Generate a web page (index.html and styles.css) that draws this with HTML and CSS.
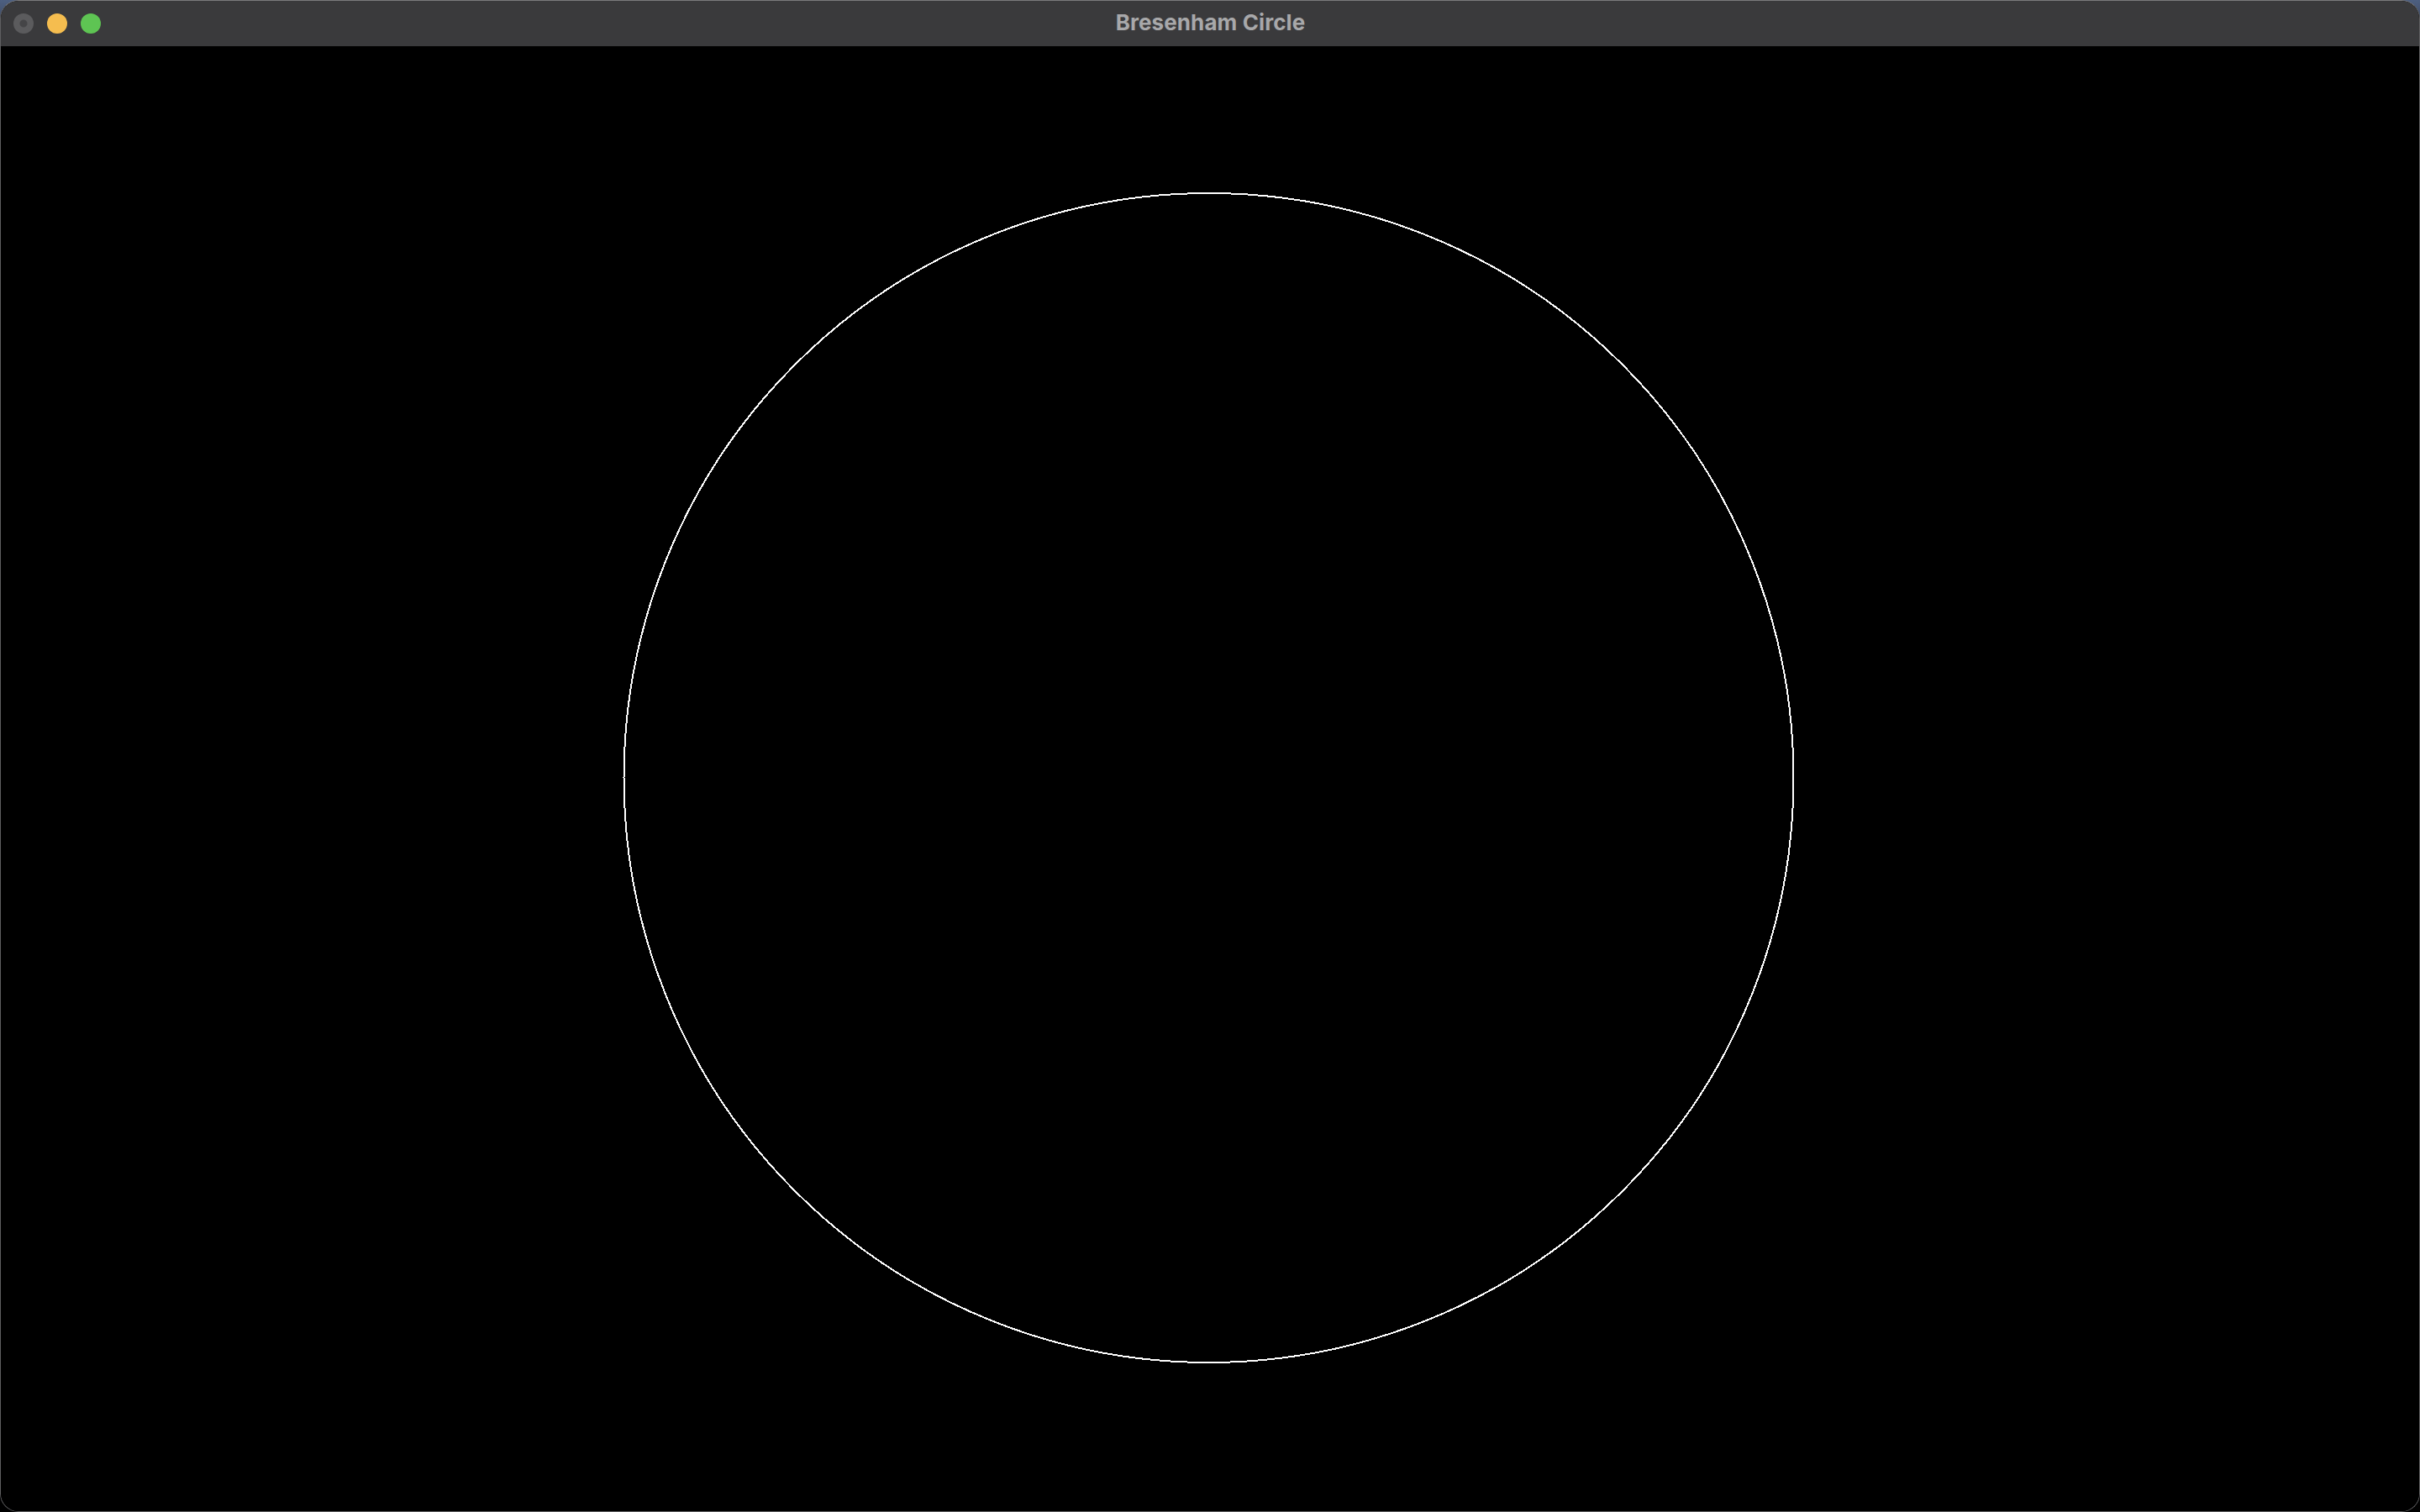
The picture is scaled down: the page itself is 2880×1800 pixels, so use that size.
FILE: index.html
```html
<!DOCTYPE html>
<html>
<head>
<meta charset="utf-8">
<title>Bresenham Circle</title>
<link rel="stylesheet" href="styles.css">
</head>
<body>
<div class="window">
  <div class="titlebar">
    <div class="lights">
      <span class="light close"></span>
      <span class="light min"></span>
      <span class="light max"></span>
    </div>
    <div class="title">Bresenham Circle</div>
  </div>
  <div class="canvas">
    <svg class="drawing" width="2878" height="1744" viewBox="0 0 2878 1744">
      <circle cx="1437.5" cy="871" r="696" fill="none" stroke="#ffffff" stroke-width="2" shape-rendering="crispEdges"/>
    </svg>
  </div>
</div>
</body>
</html>
```
FILE: styles.css
```css
html, body {
  margin: 0;
  padding: 0;
  width: 2880px;
  height: 1800px;
  overflow: hidden;
  background: linear-gradient(#4d5f80 0, #2a3040 60px, #0a0a0c 200px, #000 100%);
  font-family: Inter, "Liberation Sans", sans-serif;
}
.window {
  box-sizing: border-box;
  width: 2880px;
  height: 1800px;
  border: 1px solid #5e5e60;
  border-top-color: #7a7a7c;
  border-radius: 22px;
  overflow: hidden;
  display: flex;
  flex-direction: column;
  background: #000;
}
.titlebar {
  position: relative;
  height: 54px;
  flex: none;
  background: #3a3a3c;
  display: flex;
  align-items: center;
  justify-content: center;
}
.lights {
  position: absolute;
  left: 15px;
  top: 15px;
  display: flex;
  gap: 16px;
}
.light {
  width: 24px;
  height: 24px;
  border-radius: 50%;
  box-sizing: border-box;
}
.close {
  background: radial-gradient(circle, #454547 0 4px, #5b5b5d 5px);
}
.min { background: #f5bd4f; }
.max { background: #5ec453; }
.title {
  color: #a8a8aa;
  font-weight: 700;
  font-size: 26px;
  letter-spacing: 0.1px;
  padding-bottom: 4px;
  padding-left: 1px;
}
.canvas {
  flex: 1;
  background: #000;
  position: relative;
}
.drawing {
  display: block;
}
```
